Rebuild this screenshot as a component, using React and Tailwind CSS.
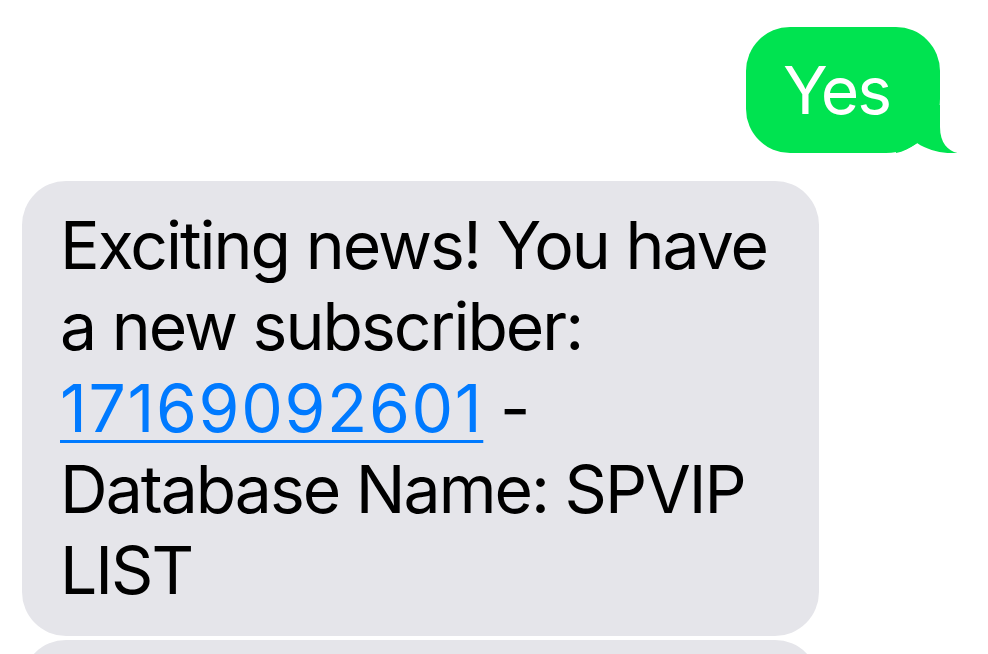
export default function App() {
  return (
    <div className="h-[654px] w-[988px] overflow-hidden bg-white font-['Inter',sans-serif] text-[66px] leading-[81px] tracking-[-0.03em]">
      {/* Outgoing */}
      <div className="flex justify-end pr-[48px] pt-[27px]">
        <div className="relative h-[126px] w-[194px] rounded-[44px] rounded-br-[54px] bg-[#00e350] pl-[37px] pt-[23px] text-white">
          Yes
          <svg
            className="absolute bottom-0 right-[-18px]"
            width="62"
            height="48"
            viewBox="0 0 62 48"
            aria-hidden="true"
          >
            <path
              d="M44 0 L44 22 C44 38 52 46 61.5 48 C48 49 33 46 21 38 C14 43 7 47 0 48 L0 0 Z"
              fill="#00e350"
            />
          </svg>
        </div>
      </div>

      {/* Incoming */}
      <div className="ml-[22px] mt-[28px] w-[797px] whitespace-nowrap rounded-[44px] bg-[#e5e5ea] px-[38px] pb-[25px] pt-[24px] leading-[81.25px] text-black">
        <div>Exciting news! You have</div>
        <div>a new subscriber:</div>
        <div>
          <a
            href="#"
            className="tracking-[0.025em] text-[#007aff] underline decoration-[3px] underline-offset-[8px]"
          >
            17169092601
          </a>{' '}
          -
        </div>
        <div>Database Name: SPVIP</div>
        <div>LIST</div>
      </div>

      <div className="ml-[22px] mt-[4px] h-[200px] w-[797px] rounded-[44px] bg-[#e5e5ea]" />
    </div>
  )
}
